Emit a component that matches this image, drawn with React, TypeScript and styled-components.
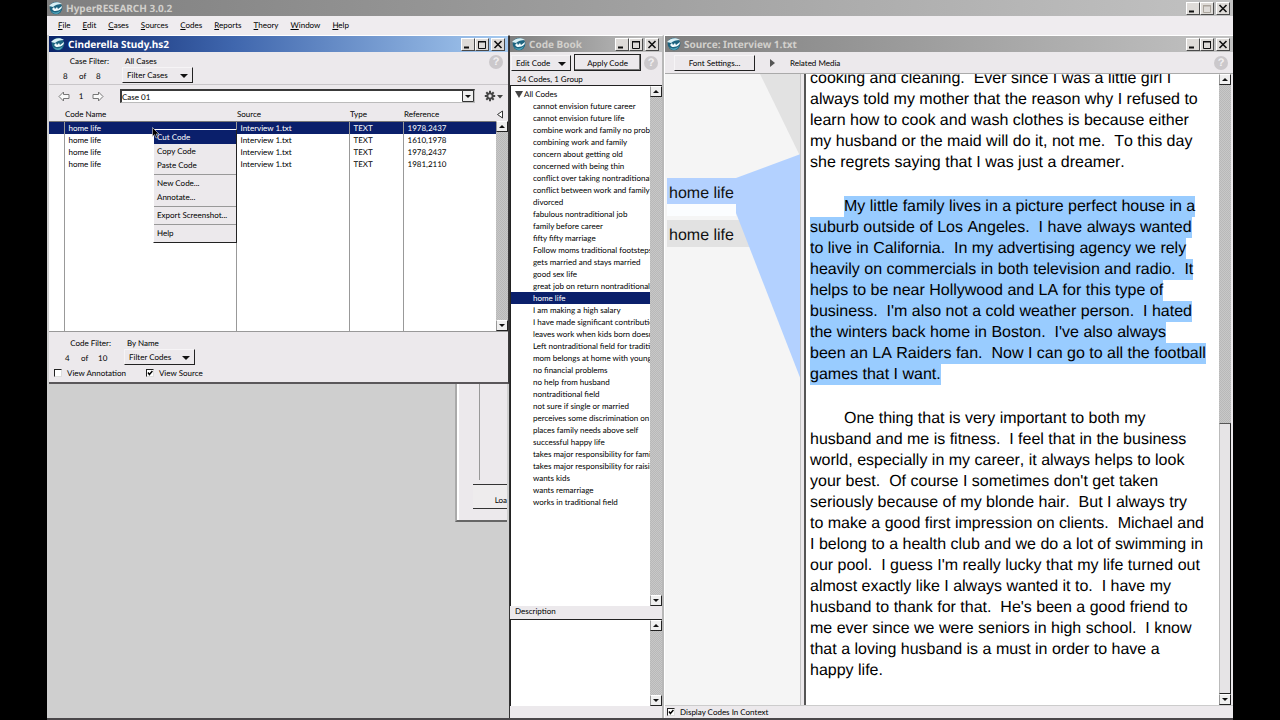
import React from "react";
import styled, { createGlobalStyle, css } from "styled-components";

const face = "#ece9ec";
const navy = "#0a1f6b";
const ui = `Lato, "Liberation Sans", sans-serif`;

const GlobalStyle = createGlobalStyle`
  *, *::before, *::after { box-sizing: border-box; }
  body { margin: 0; background: #000; text-rendering: geometricPrecision; }
  button, select, textarea, input { font: inherit; color: inherit; margin: 0; text-rendering: inherit; }
`;

/* ---------- application frame ---------- */

const Frame = styled.div`
  height: 100vh;
  min-height: 600px;
  padding: 0 47px;
  background: #000;
  font: 8px/12px ${ui};
  color: #000;
  display: flex;
`;

const AppWindow = styled.div`
  flex: 1;
  min-width: 0;
  display: flex;
  flex-direction: column;
  background: #cfcfcf;
  border-bottom: 2px solid #4a474a;
`;

const TitleBar = styled.header<{ $active?: boolean }>`
  flex: none;
  display: flex;
  align-items: center;
  gap: 3px;
  height: 16px;
  padding: 0 3px 0 2px;
  color: ${(p) => (p.$active ? "#fff" : "#d2d0cc")};
  background: ${(p) =>
    p.$active
      ? "linear-gradient(90deg, #0a246a, #3f66ad 40%, #a6caf0)"
      : "linear-gradient(90deg, #7f7f7f, #c2c2c2)"};
`;

const TitleText = styled.h1`
  flex: 1;
  min-width: 0;
  margin: 0;
  overflow: hidden;
  white-space: nowrap;
  font: bold 10px/14px "Noto Sans", "Open Sans", sans-serif;
`;

const CaptionButtons = styled.div`
  display: flex;
  button:last-child { margin-left: 2px; }
`;

const CaptionButton = styled.button`
  width: 14px;
  height: 13px;
  padding: 0;
  display: grid;
  place-items: center;
  background: #dedbd8;
  border: 1px solid;
  border-color: #fff #4a4a4a #4a4a4a #fff;
  color: #111;
  &:disabled { color: #aaa49c; }
`;

const MenuBar = styled.nav`
  flex: none;
  display: flex;
  align-items: center;
  gap: 12px;
  height: 19px;
  padding: 0 11px 1px;
  background: #efecef;
`;

const MenuButton = styled.button`
  padding: 0;
  border: 0;
  background: none;
`;

const Desktop = styled.main`
  flex: 1;
  min-height: 0;
  display: grid;
  grid-template-columns: minmax(0, 462fr) minmax(0, 155fr) minmax(0, 569fr);
`;

const Window = styled.section`
  position: relative;
  min-width: 0;
  min-height: 0;
  display: flex;
  flex-direction: column;
  background: ${face};
  border-top: 1px solid #fff;
`;

/* ---------- shared controls ---------- */

const PullDownWrap = styled.span<{ $boxed?: boolean; $width?: number }>`
  position: relative;
  display: flex;
  ${(p) => (p.$width ? `width: ${p.$width}px;` : "flex: 1;")}
  svg {
    position: absolute;
    right: ${(p) => (p.$boxed ? 0 : 5)}px;
    top: ${(p) => (p.$boxed ? 0 : 7)}px;
    pointer-events: none;
  }
`;

const PullDown = styled.select<{ $boxed?: boolean }>`
  appearance: none;
  width: 100%;
  height: ${(p) => (p.$boxed ? 14 : 16)}px;
  padding: 0 4px;
  border-radius: 0;
  outline: 0;
  ${(p) =>
    p.$boxed
      ? css`
          background: #fff;
          border: 1px solid;
          border-width: 2px 1px 1px 2px;
          border-color: #3a3a3a #bbb #bbb #3a3a3a;
          padding: 0;
          line-height: 10px;
        `
      : css`
          background: ${face};
          border: 1px solid;
          border-color: #f6f4f6 #222 #222 #f6f4f6;
        `}
`;

const PushButton = styled.button<{ $default?: boolean }>`
  height: ${(p) => (p.$default ? 17 : 16)}px;
  flex: none;
  padding: 0;
  background: ${face};
  border: 1px solid;
  border-color: ${(p) => (p.$default ? "#222" : "#f6f4f6 #222 #222 #f6f4f6")};
  box-shadow: ${(p) => (p.$default ? "inset -1px -1px #777" : "none")};
`;

const CheckLabel = styled.label`
  display: flex;
  align-items: center;
  gap: 5px;
  white-space: nowrap;
`;

const CheckBox = styled.input`
  appearance: none;
  width: 8px;
  height: 8px;
  background: #fff;
  border: 1px solid;
  border-color: #222 #ddd #ddd #222;
  &:checked {
    background: #fff
      url("data:image/svg+xml,%3Csvg xmlns='http://www.w3.org/2000/svg' viewBox='0 0 6 6'%3E%3Cpath d='M1 2.5 2.4 4.5 5.4 1' fill='none' stroke='%23000' stroke-width='1.4'/%3E%3C/svg%3E");
  }
`;

const ScrollTrack = styled.div`
  flex: none;
  min-height: 0;
  width: 12px;
  display: flex;
  flex-direction: column;
  justify-content: space-between;
  background: repeating-conic-gradient(#b8b8b8 0 25%, #c8c8c8 0 50%) 0 0 / 2px 2px;
`;

const ScrollButton = styled.button`
  flex: none;
  width: 12px;
  height: 11px;
  padding: 0;
  display: grid;
  place-items: center;
  background: #efefef;
  border: 1px solid;
  border-color: #fff #222 #222 #999;
`;

const ScrollThumb = styled.div`
  height: 43%;
  margin-top: auto;
  background: #e6e4e6;
  border: 1px solid;
  border-color: #555 #222 #222 #bbb;
`;

const HelpButton = styled.button`
  width: 14px;
  height: 14px;
  flex: none;
  padding: 0;
  border: 0;
  border-radius: 50%;
  background: #cbc8cb;
  color: #f2f0f2;
  font: bold 11px/14px "Liberation Sans", sans-serif;
`;

/* ---------- study window ---------- */

const LeftColumn = styled.div`
  min-width: 0;
  min-height: 0;
  padding-left: 2px;
  display: flex;
  flex-direction: column;
`;

const StudyWindow = styled(Window)`
  border-right: 1px solid #3c3a3c;
  border-bottom: 2px solid #5a575a;
`;

const FilterBar = styled.div<{ $top?: boolean }>`
  display: flex;
  align-items: flex-start;
  gap: 13px;
  height: 33px;
  padding: ${(p) => (p.$top ? "3px 5px 0 12px" : "5px 5px 0 14px")};
  border-bottom: ${(p) => (p.$top ? "1px solid #c9c6c9" : "0")};
`;

const FilterCount = styled.div`
  width: 48px;
  display: grid;
  gap: 3px;
  > span { text-align: right; }
`;

const CountRow = styled.div`
  display: grid;
  grid-template-columns: 16px 17px 1fr;
  padding-left: 2px;
`;

const FilterChoice = styled.div`
  flex: 1;
  display: grid;
  > label { padding-left: 3px; }
`;

const CaseBar = styled.div`
  display: flex;
  align-items: center;
  gap: 7px;
  height: 22px;
  padding: 0 4px 0 9px;
`;

const IconButton = styled.button`
  display: flex;
  align-items: center;
  padding: 0;
  border: 0;
  background: none;
`;

const CaseNumber = styled.span`
  width: 8px;
  text-align: center;
`;

const CaseSlot = styled.div`
  flex: 1;
  display: flex;
  padding: 0 2px 0 9px;
`;

const TableArea = styled.div`
  display: flex;
  height: 225px;
  border-bottom: 1px solid #999;
`;

const CodeTable = styled.table`
  flex: 1;
  height: 100%;
  table-layout: fixed;
  border-collapse: collapse;
  background: #fff;

  th {
    height: 14px;
    padding: 0 0 0 1px;
    text-align: left;
    font-weight: normal;
    background: ${face};
    border-bottom: 1px solid #777;
  }
  td {
    height: 12px;
    padding: 0 0 0 4px;
    border-right: 1px solid #999;
    white-space: nowrap;
  }
  td:last-child { border-right: 0; }
`;

const Row = styled.tr<{ $selected?: boolean; $filler?: boolean }>`
  ${(p) => p.$selected && `background: ${navy}; color: #fff;`}
  ${(p) => p.$filler && "td { height: auto; }"}
`;

const TableSide = styled.div`
  display: flex;
  flex-direction: column;
  ${ScrollTrack} { flex: 1; }
`;

const CollapseButton = styled(IconButton)`
  height: 14px;
`;

const CheckRow = styled.div`
  display: flex;
  gap: 20px;
  height: 17px;
  padding: 0 5px 2px;
`;

const ContextMenu = styled.div`
  position: absolute;
  left: 104px;
  top: 93px;
  width: 84px;
  padding: 0 0 2px;
  background: ${face};
  border: 1px solid;
  border-color: #fff #222 #222 #fff;
`;

const ContextItem = styled.button<{ $active?: boolean }>`
  display: block;
  width: 100%;
  height: 14px;
  padding: 0 3px;
  border: 0;
  text-align: left;
  white-space: nowrap;
  background: ${(p) => (p.$active ? navy : "none")};
  color: ${(p) => (p.$active ? "#fff" : "inherit")};
`;

const ContextRule = styled.hr`
  height: 1px;
  margin: 2px 0 1px;
  border: 0;
  background: #999;
`;

const Pointer = styled.svg`
  position: absolute;
  left: 103px;
  top: 91px;
`;

const BackWindow = styled.section`
  align-self: flex-end;
  width: 52px;
  height: 138px;
  margin-right: 2px;
  padding: 0 0 0 16px;
  display: flex;
  flex-direction: column;
  background: ${face};
  border-left: 2px solid #aaa;
  border-bottom: 2px solid #666;
  box-shadow: inset 2px 0 #fff;
`;

const BackPane = styled.div`
  flex: 1;
  margin: 0 0 4px 6px;
  border-left: 1px solid #999;
`;

const BackButton = styled.button`
  height: 25px;
  margin-bottom: 11px;
  padding: 6px 0 0;
  text-align: right;
  border: solid #333;
  border-width: 1px 0;
  background: #eeeced;
`;

/* ---------- code book window ---------- */

const BookWindow = styled(Window)`
  border-left: 1px solid #333;
  border-right: 2px solid #b8b8b8;
`;

const BookTools = styled.div`
  display: flex;
  align-items: center;
  gap: 3px;
  height: 21px;
  padding: 0 4px 0 1px;
`;

const BookCaption = styled.label<{ $lead?: boolean }>`
  flex: none;
  height: ${(p) => (p.$lead ? 12 : 13)}px;
  padding-left: ${(p) => (p.$lead ? 7 : 5)}px;
  line-height: ${(p) => (p.$lead ? 12 : 10)}px;
`;

const ListPane = styled.div<{ $grow?: boolean }>`
  display: flex;
  min-height: 0;
  ${(p) => (p.$grow ? "flex: 1;" : "height: 87px; flex: none;")}
  border-top: 1px solid #222;
  border-left: 1px solid #222;
  background: #fff;
`;

const CodeList = styled.ul`
  flex: 1;
  min-width: 0;
  margin: 0;
  padding: 2px 0 0;
  overflow: hidden;
  list-style: none;
`;

const GroupItem = styled.li`
  display: flex;
  align-items: center;
  gap: 1px;
  height: 12px;
  padding-left: 4px;
`;

const CodeItem = styled.li<{ $selected?: boolean }>`
  height: 12px;
  padding-left: 22px;
  overflow: hidden;
  white-space: nowrap;
  ${(p) => p.$selected && `background: ${navy}; color: #fff;`}
`;

const DescriptionBox = styled.textarea`
  flex: 1;
  min-width: 0;
  padding: 2px;
  border: 0;
  outline: 0;
  resize: none;
  background: #fff;
`;

const BookFooter = styled.div`
  flex: none;
  height: 12px;
`;

const ApplyButton = styled(PushButton)`
  flex: 1;
`;

/* ---------- source window ---------- */

const SourceWindow = styled(Window)`
  border-left: 1px solid #fff;
`;

const SourceTools = styled.div`
  display: flex;
  align-items: center;
  gap: 15px;
  height: 22px;
  padding: 0 5px 0 9px;
  border-bottom: 1px solid #aaa;
  ${HelpButton} { margin-left: auto; }
`;

const FontButton = styled(PushButton)`
  width: 81px;
`;

const DisclosureButton = styled(IconButton)`
  gap: 14px;
`;

const SourceBody = styled.div`
  flex: 1;
  min-height: 0;
  display: flex;
`;

const MarginPane = styled.div`
  position: relative;
  flex: none;
  width: 136px;
  padding: 104px 0 0 2px;
  background: #f5f5f5;
  border-right: 1px solid #c4c4c4;
  overflow: hidden;
`;

const Connectors = styled.svg`
  position: absolute;
  left: 0;
  top: 0;
`;

const MarginLabel = styled.button<{ $active?: boolean }>`
  position: relative;
  display: block;
  width: 70px;
  height: 26px;
  margin-bottom: 16px;
  padding: 5px 2px 0;
  border: 0;
  text-align: left;
  white-space: nowrap;
  background: ${(p) => (p.$active ? "#b3d1ff" : "#e2e2e2")};
  color: #111;
  font: 16px/20px "Liberation Sans", sans-serif;
`;

const TextPane = styled.article`
  flex: 1;
  min-width: 0;
  margin-left: 3px;
  padding-left: 4px;
  overflow: hidden;
  background: #fff;
  border-left: 2px solid #555;
  font: 16px/21px "Liberation Sans", sans-serif;
  font-kerning: none;
`;

const Transcript = styled.div`
  margin-top: -6px;
`;

const Paragraph = styled.p<{ $indent?: boolean }>`
  margin: 0 0 23px;
  white-space: pre;
  > span:first-child { margin-left: ${(p) => (p.$indent ? 34 : 0)}px; }
`;

const Line = styled.span<{ $marked?: boolean }>`
  display: block;
  width: fit-content;
  height: 21px;
  background: ${(p) => (p.$marked ? "#99ccff" : "none")};
`;

const SourceScroll = styled.div`
  display: flex;
  margin-right: 2px;
`;

const StatusBar = styled.footer`
  flex: none;
  display: flex;
  align-items: center;
  height: 13px;
  padding: 0 0 1px 2px;
  border-top: 1px solid #ccc;
`;

/* ---------- icons ---------- */

const Logo = () => (
  <svg width="14" height="14" viewBox="0 0 14 14" aria-hidden="true">
    <circle cx="7" cy="7" r="6.3" fill="#1d6480" />
    <path d="M0 5C3 1 9 0 13 3 9 3 6 4 4 6Z" fill="#d9f0f5" />
    <path d="M3 8 5 6 6 8 8 6 9 8 13 5C13 9 9 10 5 10Z" fill="#f2fbfd" />
    <path d="M2 10C5 12 9 12 12 9 10 14 5 14 2 10Z" fill="#4fa3b8" />
  </svg>
);

const Triangle = ({ up, size = 6 }: { up?: boolean; size?: number }) => (
  <svg width={size} height={size / 2} viewBox="0 0 6 3" aria-hidden="true">
    <path d={up ? "M0 3 3 0 6 3Z" : "M0 0H6L3 3Z"} fill="#111" />
  </svg>
);

const Arrow = ({ right }: { right?: boolean }) => (
  <svg width="12" height="11" viewBox="0 0 12 11" aria-hidden="true">
    <path
      d="M1 5.5 5.5 1V3.5H11V7.5H5.5V10Z"
      transform={right ? "rotate(180 6 5.5)" : undefined}
      fill="#fafafa"
      stroke="#777"
      strokeWidth="1"
    />
  </svg>
);

const Gear = () => (
  <svg width="20" height="12" viewBox="0 0 20 12" aria-hidden="true">
    <g stroke="#444" strokeWidth="2">
      <path d="M6 .8V11.2M.8 6H11.2M2.3 2.3 9.7 9.7M9.7 2.3 2.3 9.7" />
    </g>
    <circle cx="6" cy="6" r="3.6" fill="#444" />
    <circle cx="6" cy="6" r="1.7" fill={face} />
    <path d="M13 5H19L16 8.5Z" fill="#444" />
  </svg>
);

/* ---------- composed parts ---------- */

function Caption({ locked }: { locked?: boolean }) {
  return (
    <CaptionButtons>
      <CaptionButton aria-label="Minimize">
        <svg width="10" height="9"><path d="M1 7.5H6" stroke="#111" strokeWidth="2" /></svg>
      </CaptionButton>
      <CaptionButton aria-label="Maximize" disabled={locked}>
        <svg width="10" height="9">
          <path d="M1.5 1V8.5H8.5V1M1 1.5H9M1 2H9" stroke="currentColor" fill="none" />
        </svg>
      </CaptionButton>
      <CaptionButton aria-label="Close">
        <svg width="10" height="9"><path d="M1.5 1 8.5 8M8.5 1 1.5 8" stroke="#111" strokeWidth="1.6" /></svg>
      </CaptionButton>
    </CaptionButtons>
  );
}

function Title({ text, active, locked }: { text: string; active?: boolean; locked?: boolean }) {
  return (
    <TitleBar $active={active}>
      <Logo />
      <TitleText>{text}</TitleText>
      <Caption locked={locked} />
    </TitleBar>
  );
}

function Scroll({ thumb }: { thumb?: boolean }) {
  return (
    <ScrollTrack>
      <ScrollButton aria-label="Scroll up"><Triangle up /></ScrollButton>
      {thumb && <ScrollThumb />}
      <ScrollButton aria-label="Scroll down"><Triangle /></ScrollButton>
    </ScrollTrack>
  );
}

function Choice({ id, text, width, label }: { id: string; text: string; width: number; label?: string }) {
  return (
    <PullDownWrap $width={width}>
      <PullDown id={id} aria-label={label}>
        <option>{text}</option>
      </PullDown>
      <Triangle size={8} />
    </PullDownWrap>
  );
}

const menus = ["File", "Edit", "Cases", "Sources", "Codes", "Reports", "Theory", "Window", "Help"];

const references = ["1978,2437", "1610,1978", "1978,2437", "1981,2110"];

const codes = [
  "cannot envision future career",
  "cannot envision future life",
  "combine work and family no problem",
  "combining work and family",
  "concern about getting old",
  "concerned with being thin",
  "conflict over taking nontraditional ro",
  "conflict between work and family",
  "divorced",
  "fabulous nontraditional job",
  "family before career",
  "fifty fifty marriage",
  "Follow moms traditional footsteps",
  "gets married and stays married",
  "good sex life",
  "great job on return nontraditional",
  "home life",
  "I am making a high salary",
  "I have made significant contribution",
  "leaves work when kids born doesn'",
  "Left nontraditional field for traditiona",
  "mom belongs at home with young k",
  "no financial problems",
  "no help from husband",
  "nontraditional field",
  "not sure if single or married",
  "perceives some discrimination on jo",
  "places family needs above self",
  "successful happy life",
  "takes major responsibility for family w",
  "takes major responsibility for raising",
  "wants kids",
  "wants remarriage",
  "works in traditional field",
];

const opening = [
  "cooking and cleaning.  Ever since I was a little girl I",
  "always told my mother that the reason why I refused to",
  "learn how to cook and wash clothes is because either",
  "my husband or the maid will do it, not me.  To this day",
  "she regrets saying that I was just a dreamer.",
];

const family = [
  "My little family lives in a picture perfect house in a",
  "suburb outside of Los Angeles.  I have always wanted",
  "to live in California.  In my advertising agency we rely",
  "heavily on commercials in both television and radio.  It",
  "helps to be near Hollywood and LA for this type of",
  "business.  I'm also not a cold weather person.  I hated",
  "the winters back home in Boston.  I've also always",
  "been an LA Raiders fan.  Now I can go to all the football",
  "games that I want.",
];

const fitness = [
  "One thing that is very important to both my",
  "husband and me is fitness.  I feel that in the business",
  "world, especially in my career, it always helps to look",
  "your best.  Of course I sometimes don't get taken",
  "seriously because of my blonde hair.  But I always try",
  "to make a good first impression on clients.  Michael and",
  "I belong to a health club and we do a lot of swimming in",
  "our pool.  I guess I'm really lucky that my life turned out",
  "almost exactly like I always wanted it to.  I have my",
  "husband to thank for that.  He's been a good friend to",
  "me ever since we were seniors in high school.  I know",
  "that a loving husband is a must in order to have a",
  "happy life.",
];

function Passage({ lines, indent, marked }: { lines: string[]; indent?: boolean; marked?: boolean }) {
  return (
    <Paragraph $indent={indent}>
      {lines.map((line) => (
        <Line key={line} $marked={marked}>{line}</Line>
      ))}
    </Paragraph>
  );
}

function CaseSelect() {
  return (
    <CaseSlot>
      <PullDownWrap $boxed>
        <PullDown $boxed aria-label="Case">
          <option>Case 01</option>
        </PullDown>
        <svg width="14" height="14" aria-hidden="true">
          <path d="M1.5 1.5H12.5V12.5H1.5Z" fill="#efefef" stroke="#333" />
          <path d="M4 6H10L7 9Z" fill="#111" />
        </svg>
      </PullDownWrap>
    </CaseSlot>
  );
}

function Study() {
  return (
    <StudyWindow>
      <Title text="Cinderella Study.hs2" active />
      <FilterBar $top>
        <FilterCount>
          <span>Case Filter:</span>
          <CountRow><span>8</span><span>of</span><span>8</span></CountRow>
        </FilterCount>
        <FilterChoice>
          <label htmlFor="case-filter">All Cases</label>
          <Choice id="case-filter" text="Filter Cases" width={71} />
        </FilterChoice>
        <HelpButton>?</HelpButton>
      </FilterBar>
      <CaseBar>
        <IconButton aria-label="Previous case"><Arrow /></IconButton>
        <CaseNumber>1</CaseNumber>
        <IconButton aria-label="Next case"><Arrow right /></IconButton>
        <CaseSelect />
        <IconButton aria-label="Case options"><Gear /></IconButton>
      </CaseBar>
      <TableArea>
        <CodeTable>
          <colgroup>
            <col width="15" />
            <col />
            <col width="113" />
            <col width="54" />
            <col width="93" />
          </colgroup>
          <thead>
            <tr>
              <th />
              <th>Code Name</th>
              <th>Source</th>
              <th>Type</th>
              <th>Reference</th>
            </tr>
          </thead>
          <tbody>
            {references.map((reference, i) => (
              <Row key={i} $selected={i === 0}>
                <td />
                <td>home life</td>
                <td>Interview 1.txt</td>
                <td>TEXT</td>
                <td>{reference}</td>
              </Row>
            ))}
            <Row $filler><td /><td /><td /><td /><td /></Row>
          </tbody>
        </CodeTable>
        <TableSide>
          <CollapseButton aria-label="Collapse columns">
            <svg width="8" height="9"><path d="M6.5 1V8L1.5 4.5Z" fill="#fff" stroke="#333" /></svg>
          </CollapseButton>
          <Scroll />
        </TableSide>
      </TableArea>
      <FilterBar>
        <FilterCount>
          <span>Code Filter:</span>
          <CountRow><span>4</span><span>of</span><span>10</span></CountRow>
        </FilterCount>
        <FilterChoice>
          <label htmlFor="code-filter">By Name</label>
          <Choice id="code-filter" text="Filter Codes" width={71} />
        </FilterChoice>
      </FilterBar>
      <CheckRow>
        <CheckLabel><CheckBox type="checkbox" />View Annotation</CheckLabel>
        <CheckLabel><CheckBox type="checkbox" defaultChecked />View Source</CheckLabel>
      </CheckRow>
      <ContextMenu role="menu">
        <ContextItem $active>Cut Code</ContextItem>
        <ContextItem>Copy Code</ContextItem>
        <ContextItem>Paste Code</ContextItem>
        <ContextRule />
        <ContextItem>New Code...</ContextItem>
        <ContextItem>Annotate...</ContextItem>
        <ContextRule />
        <ContextItem>Export Screenshot...</ContextItem>
        <ContextRule />
        <ContextItem>Help</ContextItem>
      </ContextMenu>
      <Pointer width="8" height="12" viewBox="0 0 8 12">
        <path d="M.5 .5V9.5L2.6 7.6 4 11 5.6 10.3 4.2 7H7Z" fill="#000" stroke="#ddd" strokeWidth=".6" />
      </Pointer>
    </StudyWindow>
  );
}

function CodeBook() {
  return (
    <BookWindow>
      <Title text="Code Book" />
      <BookTools>
        <Choice id="edit-code" text="Edit Code" width={60} label="Edit Code" />
        <ApplyButton $default>Apply Code</ApplyButton>
        <HelpButton>?</HelpButton>
      </BookTools>
      <BookCaption as="div" $lead>34 Codes, 1 Group</BookCaption>
      <ListPane $grow>
        <CodeList>
          <GroupItem>
            <svg width="8" height="7"><path d="M0 0H8L4 7Z" fill="#444" /></svg>
            All Codes
          </GroupItem>
          {codes.map((code) => (
            <CodeItem key={code} $selected={code === "home life"}>{code}</CodeItem>
          ))}
        </CodeList>
        <Scroll />
      </ListPane>
      <BookCaption htmlFor="description">Description</BookCaption>
      <ListPane>
        <DescriptionBox id="description" />
        <Scroll />
      </ListPane>
      <BookFooter />
    </BookWindow>
  );
}

function Source() {
  return (
    <SourceWindow>
      <Title text="Source: Interview 1.txt" />
      <SourceTools>
        <FontButton>Font Settings...</FontButton>
        <DisclosureButton>
          <svg width="6" height="8"><path d="M0 0V8L5 4Z" fill="#555" /></svg>
          Related Media
        </DisclosureButton>
        <HelpButton>?</HelpButton>
      </SourceTools>
      <SourceBody>
        <MarginPane>
          <Connectors width="136" height="640" viewBox="0 0 136 640">
            <path d="M95 0H136V84Z" fill="#e2e2e2" />
            <path d="M2 146H76L85 173H2Z" fill="#e2e2e2" />
            <path d="M2 130H71V142H2Z" fill="#fbfdff" />
            <path d="M71 104 98 94 136 80V306L71 139Z" fill="#b3d1ff" />
          </Connectors>
          <MarginLabel $active>home life</MarginLabel>
          <MarginLabel>home life</MarginLabel>
        </MarginPane>
        <TextPane>
          <Transcript>
            <Passage lines={opening} />
            <Passage lines={family} indent marked />
            <Passage lines={fitness} indent />
          </Transcript>
        </TextPane>
        <SourceScroll><Scroll thumb /></SourceScroll>
      </SourceBody>
      <StatusBar>
        <CheckLabel><CheckBox type="checkbox" defaultChecked />Display Codes In Context</CheckLabel>
      </StatusBar>
    </SourceWindow>
  );
}

export default function App() {
  return (
    <>
      <GlobalStyle />
      <Frame>
        <AppWindow>
          <Title text="HyperRESEARCH 3.0.2" locked />
          <MenuBar>
            {menus.map((name) => (
              <MenuButton key={name}><u>{name[0]}</u>{name.slice(1)}</MenuButton>
            ))}
          </MenuBar>
          <Desktop>
            <LeftColumn>
              <Study />
              <BackWindow>
                <BackPane />
                <BackButton>Loa</BackButton>
              </BackWindow>
            </LeftColumn>
            <CodeBook />
            <Source />
          </Desktop>
        </AppWindow>
      </Frame>
    </>
  );
}
